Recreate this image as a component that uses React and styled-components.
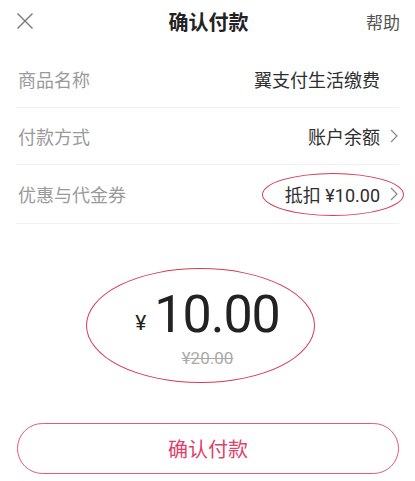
import React from 'react';
import styled, { createGlobalStyle } from 'styled-components';

const GlobalStyle = createGlobalStyle`
  html, body {
    margin: 0;
    padding: 0;
    background: #fff;
  }
  body {
    font-family: Roboto, "Noto Sans CJK SC", sans-serif;
  }
`;

const Page = styled.div`
  position: relative;
  width: 415px;
  height: 481px;
  background: #fff;
  overflow: hidden;
`;

const Header = styled.div`
  display: grid;
  grid-template-columns: 1fr auto 1fr;
  align-items: center;
  height: 42px;
  padding: 0 15px 0 17px;
  margin-bottom: 9px;
`;

const CloseIcon = styled.svg`
  width: 16px;
  height: 16px;
  display: block;
`;

const Title = styled.div`
  font-family: "Noto Sans CJK SC", sans-serif;
  font-size: 20px;
  font-weight: 700;
  color: #222;
`;

const Help = styled.div`
  justify-self: end;
  font-family: "Noto Sans CJK SC", sans-serif;
  font-size: 17px;
  color: #555;
`;

const List = styled.div`
  display: flex;
  flex-direction: column;
  margin: 0 16px;
`;

const Row = styled.div`
  position: relative;
  display: flex;
  align-items: center;
  justify-content: space-between;
  height: ${({ $h }) => $h}px;
  border-bottom: 1px solid #f0f0f0;
  padding-left: 2px;
`;

const Label = styled.span`
  font-family: "Noto Sans CJK SC", sans-serif;
  font-size: 18px;
  color: #9a9a9a;
`;

const Value = styled.span`
  display: flex;
  align-items: center;
  font-family: Roboto, "Noto Sans CJK SC", sans-serif;
  font-size: 18px;
  color: #2e2e2e;
`;

const ArrowSlot = styled.span`
  display: flex;
  justify-content: flex-end;
  width: 19px;
`;

const Chevron = styled.svg`
  width: 8px;
  height: 14px;
  display: block;
  margin-right: 1px;
`;

const Mark = styled.div`
  position: absolute;
  border: 1px solid #d63a55;
  border-radius: 50%;
  pointer-events: none;
`;

const AmountBlock = styled.div`
  position: relative;
  display: flex;
  flex-direction: column;
  align-items: center;
  height: 199px;
  box-sizing: border-box;
  padding-top: 61px;
`;

const AmountLine = styled.div`
  display: flex;
  align-items: baseline;
  font-family: Roboto, sans-serif;
  color: #222;
  height: 60px;
  line-height: 60px;
`;

const Currency = styled.span`
  font-size: 21px;
  margin-right: 8px;
  position: relative;
  top: -2px;
`;

const Big = styled.span`
  font-size: 52px;
  letter-spacing: -1px;
`;

const Original = styled.div`
  margin-top: 3px;
  font-family: Roboto, sans-serif;
  font-size: 17px;
  line-height: 20px;
  color: #aaa;
  text-decoration: line-through;
`;

const Footer = styled.div`
  padding: 0 16px 0 17px;
`;

const ConfirmButton = styled.button`
  display: flex;
  align-items: center;
  justify-content: center;
  width: 100%;
  height: 51px;
  box-sizing: border-box;
  border: 1.5px solid #e4587c;
  border-radius: 26px;
  background: #fff;
  font-family: "Noto Sans CJK SC", sans-serif;
  font-size: 20px;
  color: #e0406a;
  cursor: pointer;
`;

const ChevronIcon = () => (
  <Chevron viewBox="0 0 8 14">
    <path d="M1 1 L7 7 L1 13" fill="none" stroke="#888" strokeWidth="1.2" />
  </Chevron>
);

const rows = [
  { label: '商品名称', value: '翼支付生活缴费', arrow: false, h: 56 },
  { label: '付款方式', value: '账户余额', arrow: true, h: 56 },
  { label: '优惠与代金券', value: '抵扣 ¥10.00', arrow: true, h: 58, marked: true },
];

export default function App() {
  return (
    <Page>
      <GlobalStyle />
      <Header>
        <CloseIcon viewBox="0 0 16 16">
          <path d="M0.5 0.5 L15.5 15.5 M15.5 0.5 L0.5 15.5" stroke="#777" strokeWidth="1.4" />
        </CloseIcon>
        <Title>确认付款</Title>
        <Help>帮助</Help>
      </Header>

      <List>
        {rows.map((r) => (
          <Row key={r.label} $h={r.h}>
            <Label>{r.label}</Label>
            <Value>
              {r.value}
              <ArrowSlot>{r.arrow && <ChevronIcon />}</ArrowSlot>
            </Value>
            {r.marked && <Mark style={{ left: 246, top: 8, width: 140, height: 41 }} />}
          </Row>
        ))}
      </List>

      <AmountBlock>
        <AmountLine>
          <Currency>¥</Currency>
          <Big>10.00</Big>
        </AmountLine>
        <Original>¥20.00</Original>
        <Mark style={{ left: 86, top: 44, width: 227, height: 113 }} />
      </AmountBlock>

      <Footer>
        <ConfirmButton>确认付款</ConfirmButton>
      </Footer>
    </Page>
  );
}
